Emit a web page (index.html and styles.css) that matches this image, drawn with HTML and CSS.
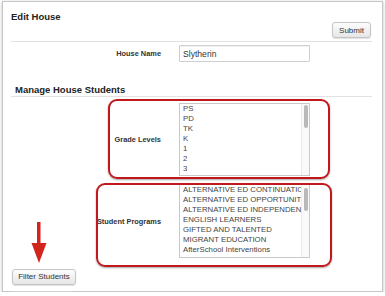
FILE: index.html
```html
<!DOCTYPE HTML>
<html>
<head>
  <title>Edit House</title>
  <meta name="viewport" content="width=device-width, initial-scale=1">
  <link rel="stylesheet" href="styles.css">
</head>
<body>
  <div class="frame">

    <div class="header">
      <h2>Edit House</h2>
      <button class="button submit">Submit</button>
    </div>

    <div class="form-row">
      <label for="houseName">House Name</label>
      <input type="text" id="houseName" class="text-input" value="Slytherin">
    </div>

    <h3 class="section-title">Manage House Students</h3>

    <div class="form-row list-row">
      <label>Grade Levels</label>
      <div class="listbox">
        <ul>
          <li>PS</li>
          <li>PD</li>
          <li>TK</li>
          <li>K</li>
          <li>1</li>
          <li>2</li>
          <li>3</li>
        </ul>
        <div class="scroll-track"><div class="scroll-thumb"></div></div>
      </div>
      <div class="callout grades"></div>
    </div>

    <div class="form-row list-row programs-row">
      <label>Student Programs</label>
      <div class="listbox tall">
        <ul>
          <li>ALTERNATIVE ED CONTINUATION</li>
          <li>ALTERNATIVE ED OPPORTUNITY</li>
          <li>ALTERNATIVE ED INDEPENDENT STUDY</li>
          <li>ENGLISH LEARNERS</li>
          <li>GIFTED AND TALENTED</li>
          <li>MIGRANT EDUCATION</li>
          <li>AfterSchool Interventions</li>
        </ul>
        <div class="scroll-track"><div class="scroll-thumb"></div></div>
      </div>
      <div class="callout programs"></div>
    </div>

    <div class="footer">
      <button class="button filter">Filter Students</button>
      <div class="footer-line"></div>
    </div>

    <!-- red arrow pointing at the filter button -->
    <svg class="arrow" width="16" height="42" viewBox="0 0 16 42">
      <rect x="6" y="0" width="3.5" height="23" fill="#d2231c"/>
      <polygon points="0.5,21 15.5,21 8,41" fill="#d2231c"/>
    </svg>

  </div>
</body>
</html>
```

FILE: styles.css
```css
body {
  margin: 0;
  background: #fff;
  font-family: "Liberation Sans", Arial, sans-serif;
  color: #333;
}
.frame {
  position: relative;
  box-sizing: border-box;
  width: 381px;
  height: 291px;
  margin: 1px 0 0 2px;
  border: 1px solid #c6c6c6;
  background: #fff;
  box-shadow: 0 1px 3px rgba(0, 0, 0, 0.25);
}
.header {
  box-sizing: border-box;
  height: 40px;
  margin: 0 10px 0 8px;
  padding-top: 9px;
  display: flex;
  justify-content: space-between;
  border-bottom: 1px solid #e2e2e2;
}
.header h2 {
  margin: 0;
  font-size: 9.5px;
  line-height: 12px;
  font-weight: bold;
  color: #222;
}
.button {
  height: 16px;
  padding: 0;
  border: 1px solid #c4c4c4;
  border-radius: 3px;
  background: linear-gradient(#fdfdfd, #e6e6e6);
  box-shadow: 0 1px 1px rgba(0, 0, 0, 0.12);
  font-family: "Liberation Sans", Arial, sans-serif;
  font-size: 8px;
  color: #333;
  cursor: pointer;
}
.button.submit {
  align-self: flex-end;
  width: 39px;
  margin: 0 1px 3px 0;
}
.button.filter {
  width: 64px;
}
.form-row {
  position: relative;
  margin: 3px 10px 0 8px;
  display: grid;
  grid-template-columns: 150px 131px;
  column-gap: 18px;
  align-items: center;
}
.form-row label {
  text-align: right;
  font-size: 7.4px;
  font-weight: bold;
  color: #333;
}
.text-input {
  box-sizing: border-box;
  width: 131px;
  height: 17px;
  margin: 0;
  padding: 0 3px;
  border: 1px solid #cfcfcf;
  border-radius: 1px;
  box-shadow: inset 0 1px 1px rgba(0, 0, 0, 0.06);
  font-family: "Liberation Sans", Arial, sans-serif;
  font-size: 8.6px;
  color: #333;
  outline: none;
}
.section-title {
  margin: 22px 10px 0 8px;
  padding-left: 4px;
  font-size: 9.5px;
  line-height: 12px;
  font-weight: bold;
  color: #222;
  border-bottom: 1px solid #e2e2e2;
}
.list-row {
  margin-top: 6px;
}
.programs-row {
  margin-top: 8px;
}
.listbox {
  position: relative;
  box-sizing: border-box;
  width: 131px;
  height: 73px;
  border: 1px solid #c9c9c9;
  display: flex;
  overflow: hidden;
}
.listbox.tall {
  height: 74px;
}
.listbox ul {
  flex: 1;
  min-width: 0;
  margin: 0;
  padding: 0 0 0 3px;
  list-style: none;
  font-size: 7.8px;
  line-height: 10px;
  color: #444;
}
.listbox li {
  white-space: nowrap;
  overflow: hidden;
}
.scroll-track {
  width: 7px;
  border-left: 1px solid #ececec;
  background: #fafafa;
}
.scroll-thumb {
  width: 4px;
  height: 23px;
  margin: 1px 0 0 2px;
  border-radius: 2px;
  background: #b9b9b9;
}
.tall .scroll-thumb {
  margin-top: 3px;
}
.callout {
  position: absolute;
  box-sizing: border-box;
  border: 2px solid #c0181c;
  border-radius: 9px;
  box-shadow: 0 1px 2px rgba(0, 0, 0, 0.35);
}
.callout.grades {
  left: 97px;
  top: -4px;
  width: 222px;
  height: 80px;
}
.callout.programs {
  left: 85px;
  top: -1px;
  width: 236px;
  height: 84px;
}
.footer {
  margin: 7px 0 0 9px;
}
.footer-line {
  width: 60px;
  margin-top: 6px;
  border-top: 1px solid #d0d0d0;
}
.arrow {
  position: absolute;
  left: 28px;
  top: 220px;
}
```
